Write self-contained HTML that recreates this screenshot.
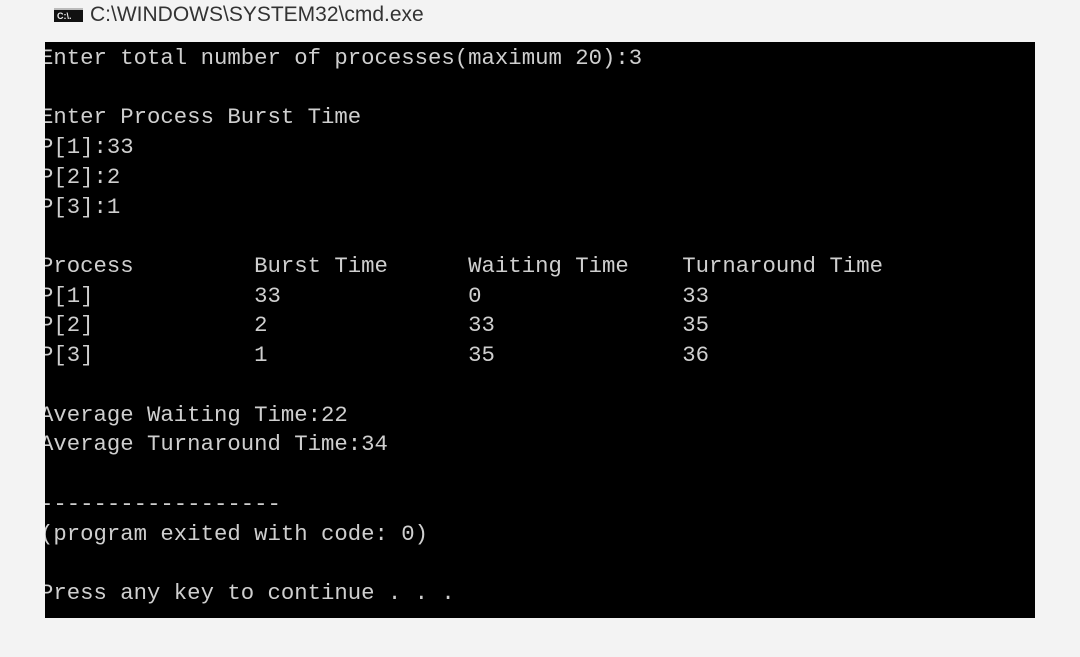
<!DOCTYPE html>
<html><head><meta charset="utf-8"><style>
html,body{margin:0;padding:0;}
body{width:1080px;height:657px;background:#f3f3f3;position:relative;overflow:hidden;}
.icon{position:absolute;left:54px;top:8px;width:29px;height:14px;background:#111;border-top:2px solid #bbb;box-sizing:border-box;color:#eee;font:bold 9px/12px "Liberation Sans",sans-serif;padding-left:3px;}
.title{position:absolute;left:90px;top:2px;font:21px/26px "Liberation Sans",sans-serif;color:#333;}
.con{position:absolute;left:45px;top:42px;width:990px;height:576px;background:#000;overflow:hidden;}
pre{position:absolute;left:-5px;top:2px;margin:0;font:22.3px/29.72px "Liberation Mono",monospace;color:#cfcfcf;}
</style></head><body>
<div class="icon">C:\.</div>
<div class="title">C:\WINDOWS\SYSTEM32\cmd.exe</div>
<div class="con"><pre>Enter total number of processes(maximum 20):3

Enter Process Burst Time
P[1]:33
P[2]:2
P[3]:1

Process         Burst Time      Waiting Time    Turnaround Time
P[1]            33              0               33
P[2]            2               33              35
P[3]            1               35              36

Average Waiting Time:22
Average Turnaround Time:34

------------------
(program exited with code: 0)

Press any key to continue . . .</pre></div>
</body></html>
